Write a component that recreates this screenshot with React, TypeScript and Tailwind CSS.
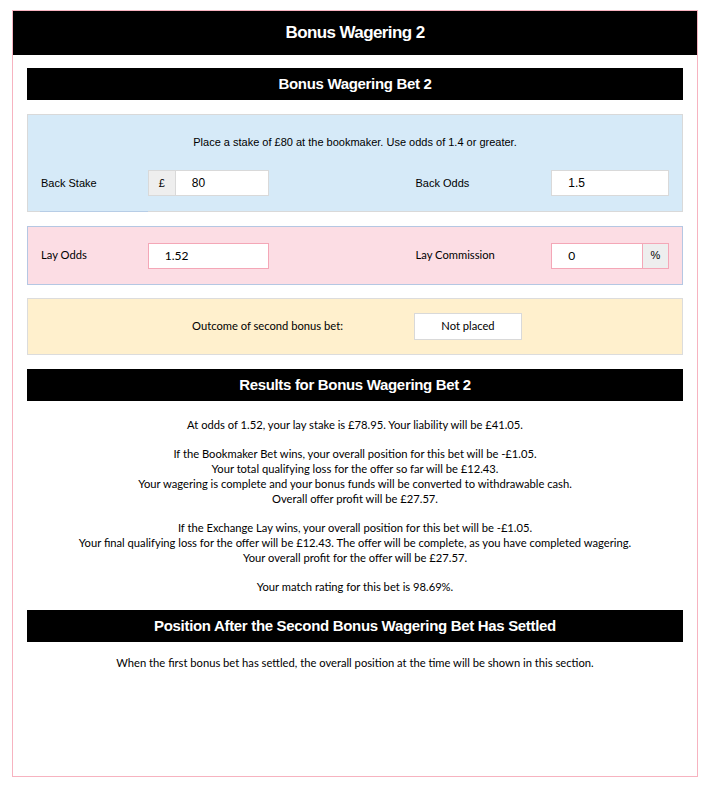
const arial = "font-[Liberation_Sans,Arial,sans-serif]";
const lato = "font-[Lato,Open_Sans,sans-serif]";

function Bar({ children, tall }: { children: React.ReactNode; tall?: boolean }) {
  return (
    <div
      className={`flex items-center justify-center bg-black font-bold text-white ${arial} ${
        tall ? "h-[44px] text-[17px] tracking-[-0.6px]" : "h-[32px] text-[15px] tracking-[-0.32px]"
      }`}
    >
      {children}
    </div>
  );
}

const results = [
  ["At odds of 1.52, your lay stake is £78.95. Your liability will be £41.05."],
  [
    "If the Bookmaker Bet wins, your overall position for this bet will be -£1.05.",
    "Your total qualifying loss for the offer so far will be £12.43.",
    "Your wagering is complete and your bonus funds will be converted to withdrawable cash.",
    "Overall offer profit will be £27.57.",
  ],
  [
    "If the Exchange Lay wins, your overall position for this bet will be -£1.05.",
    "Your final qualifying loss for the offer will be £12.43. The offer will be complete, as you have completed wagering.",
    "Your overall profit for the offer will be £27.57.",
  ],
  ["Your match rating for this bet is 98.69%."],
];

export default function App() {
  return (
    <div className="min-h-screen bg-white pl-[12px] pt-[10px]">
      <div className="flex h-[767px] w-[686px] flex-col border border-[#f7b3c0]">
        <Bar tall>Bonus Wagering 2</Bar>

        <div className="flex flex-col px-[14px] pt-[13px]">
          <Bar>Bonus Wagering Bet 2</Bar>

          {/* back bet */}
          <div className={`relative mt-[14px] h-[98px] border border-[#d9d9d9] bg-[#d6eaf8] ${arial} text-[11px] text-black`}>
            <p className="pt-[20px] text-center leading-[15px]">
              Place a stake of £80 at the bookmaker. Use odds of 1.4 or greater.
            </p>
            <div className="mt-[20px] flex items-center px-[13px]">
              <span className="w-[107px]">Back Stake</span>
              <div className="flex h-[26px] w-[121px]">
                <span className="flex w-[28px] items-center justify-center border border-[#d9d9d9] bg-[#eeeeee]">£</span>
                <span className="flex flex-1 items-center border border-l-0 border-[#d9d9d9] bg-white pl-[16px] text-[12px]">80</span>
              </div>
              <span className="ml-[147px] w-[136px]">Back Odds</span>
              <span className="flex h-[26px] w-[118px] items-center border border-[#d9d9d9] bg-white pl-[16px] text-[12px]">1.5</span>
            </div>
            <div className="absolute -bottom-px left-[12px] h-px w-[108px] bg-[#b7cde6]" />
          </div>

          {/* lay bet */}
          <div className={`mt-[14px] flex h-[59px] items-center border border-[#b5c7e3] bg-[#fcdde4] px-[13px] ${lato} text-[11.2px] text-black`}>
            <span className="w-[107px]">Lay Odds</span>
            <span className="flex h-[26px] w-[121px] items-center border border-[#f4a7b7] bg-white pl-[16px] text-[12px]">1.52</span>
            <span className="ml-[147px] w-[136px]">Lay Commission</span>
            <div className="flex h-[26px] w-[118px]">
              <span className="flex flex-1 items-center border border-[#f4a7b7] bg-white pl-[16px] text-[12px]">0</span>
              <span className={`flex w-[26px] items-center justify-center border border-l-0 border-[#f4a7b7] bg-[#eeeeee] ${arial} text-[11px]`}>%</span>
            </div>
          </div>

          {/* outcome */}
          <div className={`mt-[13px] flex h-[57px] items-center justify-center border border-[#dcdcdc] bg-[#fff0cd] pl-[4px] ${lato} text-[11.2px] text-black`}>
            <span>Outcome of second bonus bet:</span>
            <span className="ml-[71px] flex h-[27px] w-[108px] items-center justify-center border border-[#d9d9d9] bg-white">Not placed</span>
          </div>

          <div className="mt-[14px]">
            <Bar>Results for Bonus Wagering Bet 2</Bar>
          </div>

          <div className={`flex flex-col gap-[14px] pt-[16px] text-center ${lato} text-[11.2px] leading-[15px] text-black`}>
            {results.map((group, i) => (
              <div key={i}>
                {group.map((line) => (
                  <p key={line}>{line}</p>
                ))}
              </div>
            ))}
          </div>

          <div className="mt-[16px]">
            <Bar>Position After the Second Bonus Wagering Bet Has Settled</Bar>
          </div>
          <p className={`pt-[13px] text-center ${lato} text-[11.2px] leading-[15px] text-black`}>
            When the first bonus bet has settled, the overall position at the time will be shown in this section.
          </p>
        </div>
      </div>
    </div>
  );
}
